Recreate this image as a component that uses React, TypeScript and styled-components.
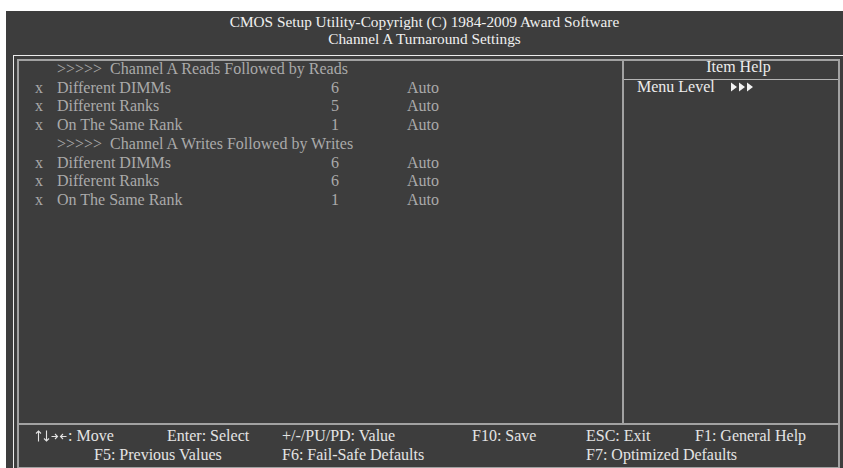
import React from "react";
import styled, { createGlobalStyle } from "styled-components";

interface ISetting {
    kind: "heading" | "item";
    label: string;
    value?: string;
    option?: string;
}

interface IFooterKey {
    text: string;
    col: number;
    span?: number;
    indent?: number;
}

const settings: ISetting[] = [
    { kind: "heading", label: "Channel A Reads Followed by Reads" },
    { kind: "item", label: "Different DIMMs", value: "6", option: "Auto" },
    { kind: "item", label: "Different Ranks", value: "5", option: "Auto" },
    { kind: "item", label: "On The Same Rank", value: "1", option: "Auto" },
    { kind: "heading", label: "Channel A Writes Followed by Writes" },
    { kind: "item", label: "Different DIMMs", value: "6", option: "Auto" },
    { kind: "item", label: "Different Ranks", value: "6", option: "Auto" },
    { kind: "item", label: "On The Same Rank", value: "1", option: "Auto" },
];

const topKeys: IFooterKey[] = [
    { text: ": Move", col: 1 },
    { text: "Enter: Select", col: 2 },
    { text: "+/-/PU/PD: Value", col: 3 },
    { text: "F10: Save", col: 4 },
    { text: "ESC: Exit", col: 5 },
    { text: "F1: General Help", col: 6 },
];

const bottomKeys: IFooterKey[] = [
    { text: "F5: Previous Values", col: 1, span: 2, indent: 59 },
    { text: "F6: Fail-Safe Defaults", col: 3, span: 2 },
    { text: "F7: Optimized Defaults", col: 5, span: 2 },
];

const GlobalStyle = createGlobalStyle`
    html, body {
        margin: 0;
        padding: 0;
        background: #ffffff;
        overflow: hidden;
    }
`

const Screen = styled.div`
    margin: 11px 0 0 6px;
    width: 837px;
    height: 457px;
    overflow: hidden;
    background: #3d3d3d;
    font-family: "Liberation Serif", "Times New Roman", serif;
    color: #aaaaaa;
`

const Header = styled.header`
    height: 42px;
    padding-top: 2px;
    text-align: center;
    color: #f0f0f0;
    font-size: 15.3px;
    line-height: 17px;
`

const OuterFrame = styled.div`
    box-sizing: border-box;
    margin-left: 7px;
    width: 831px;
    height: 418px;
    padding: 3px;
    border: 1px solid #ececec;
`

const InnerFrame = styled.div`
    box-sizing: border-box;
    height: 100%;
    display: flex;
    flex-direction: column;
    border: 2px solid #a2a2a2;
`

const Main = styled.div`
    display: flex;
    height: 362px;
    border-bottom: 2px solid #a2a2a2;
`

const SettingsList = styled.div`
    width: 603px;
    margin-top: -1px;
    padding-left: 16px;
    box-sizing: border-box;
    font-size: 16px;
    line-height: 18.7px;
`

const Row = styled.div`
    display: grid;
    grid-template-columns: 22px 253px 50px 1fr;
    white-space: pre;

    & > .value {
        text-align: center;
    }

    & > .option {
        padding-left: 47px;
    }
`

const Heading = styled.div`
    grid-column: 2 / -1;
`

const HelpPanel = styled.aside`
    flex: 1;
    border-left: 2px solid #a2a2a2;
    color: #ececec;
    font-size: 16px;
`

const HelpTitle = styled.div`
    margin-top: -3px;
    padding: 0 0 3px 15px;
    text-align: center;
    line-height: 17.5px;
    border-bottom: 1px solid #b4b4b4;
`

const HelpLine = styled.div`
    display: flex;
    align-items: center;
    gap: 16px;
    padding-left: 13px;
    line-height: 14px;
`

const Footer = styled.footer`
    flex: 1;
    display: grid;
    grid-template-columns: 132px 115px 190px 114px 109px 1fr;
    grid-auto-rows: 19px;
    padding: 1px 0 0 16px;
    color: #e4e4e4;
    font-size: 16px;
    line-height: 19px;
`

const Key = styled.div<{ $col: number; $span: number; $indent: number }>`
    grid-column: ${p => p.$col} / span ${p => p.$span};
    padding-left: ${p => p.$indent}px;
    white-space: nowrap;

    & > svg {
        vertical-align: -1px;
        margin-right: 1px;
    }
`

function LevelArrows() {
    return (
        <svg width="22" height="10" viewBox="0 0 22 10" fill="#f2f2f2">
            <polygon points="0,0.5 6,5 0,9.5" />
            <polygon points="8,0.5 14,5 8,9.5" />
            <polygon points="16,0.5 22,5 16,9.5" />
        </svg>
    )
}

function MoveArrows() {
    return (
        <svg width="32" height="12" viewBox="0 0 32 12" fill="none" stroke="#e4e4e4" strokeWidth="1.1">
            <path d="M3.5 11.5V1M1 3.5L3.5 1L6 3.5" />
            <path d="M11.5 0.5V11M9 8.5L11.5 11L14 8.5" />
            <path d="M16.5 6.5H22.5M20 4L22.5 6.5L20 9" />
            <path d="M31.5 6.5H25.5M28 4L25.5 6.5L28 9" />
        </svg>
    )
}

function FooterKeys(props: { keys: IFooterKey[]; arrows?: boolean }) {
    return (
        <>
            {
                props.keys.map((key, i) =>
                    <Key key={key.text} $col={key.col} $span={key.span ?? 1} $indent={key.indent ?? 0}>
                        {props.arrows && i === 0 && <MoveArrows />}
                        {key.text}
                    </Key>
                )
            }
        </>
    )
}

function App() {
    return (
        <>
            <GlobalStyle />
            <Screen>
                <Header>
                    <div>CMOS Setup Utility-Copyright (C) 1984-2009 Award Software</div>
                    <div>Channel A Turnaround Settings</div>
                </Header>
                <OuterFrame>
                    <InnerFrame>
                        <Main>
                            <SettingsList>
                                {
                                    settings.map((s, i) =>
                                        s.kind === "heading" ? (
                                            <Row key={i}>
                                                <Heading>{">>>>>  " + s.label}</Heading>
                                            </Row>
                                        ) : (
                                            <Row key={i}>
                                                <span>x</span>
                                                <span>{s.label}</span>
                                                <span className="value">{s.value}</span>
                                                <span className="option">{s.option}</span>
                                            </Row>
                                        )
                                    )
                                }
                            </SettingsList>
                            <HelpPanel>
                                <HelpTitle>Item Help</HelpTitle>
                                <HelpLine>
                                    <span>Menu Level</span>
                                    <LevelArrows />
                                </HelpLine>
                            </HelpPanel>
                        </Main>
                        <Footer>
                            <FooterKeys keys={topKeys} arrows />
                            <FooterKeys keys={bottomKeys} />
                        </Footer>
                    </InnerFrame>
                </OuterFrame>
            </Screen>
        </>
    )
}

export default App;
